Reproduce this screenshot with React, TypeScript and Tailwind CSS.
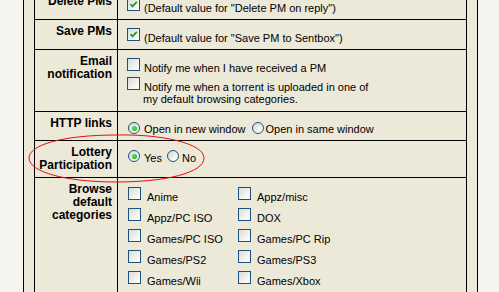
import React from 'react';

const FONT = "font-['Liberation_Sans',Arial,sans-serif]";

const CheckBox: React.FC<{ checked?: boolean }> = ({ checked }) => (
  <span className="relative block w-[13px] h-[13px] shrink-0 border border-[#1c5180] bg-[linear-gradient(135deg,#dcdcd5_0%,#f6f6f3_70%,#ffffff_100%)]">
    {checked && (
      <svg className="absolute left-[1px] top-[1px]" width="9" height="9" viewBox="0 0 9 9">
        <polyline points="1.5,4.2 3.5,6.3 7.8,1.8" fill="none" stroke="#21a121" strokeWidth="1.9" />
      </svg>
    )}
  </span>
);

const Radio: React.FC<{ checked?: boolean }> = ({ checked }) => (
  <span className="relative flex items-center justify-center w-[12px] h-[12px] shrink-0 rounded-full border border-[#1c5180] bg-[linear-gradient(135deg,#d6d6cf_0%,#f4f4f0_65%,#ffffff_100%)]">
    {checked && (
      <span className="block w-[5px] h-[5px] rounded-full bg-[radial-gradient(circle_at_40%_40%,#6be86b_0%,#2fb52f_60%,#1e931e_100%)]" />
    )}
  </span>
);

const CheckLine: React.FC<{ checked?: boolean; children: React.ReactNode; gap?: string }> = ({ checked, children, gap = 'ml-[4px]' }) => (
  <div className="flex items-start">
    <CheckBox checked={checked} />
    <span className={`${gap} pt-[4px] leading-[12px]`}>{children}</span>
  </div>
);

const Label: React.FC<{ children: React.ReactNode }> = ({ children }) => (
  <div className="w-[83px] shrink-0 border-r border-black pr-[5px] pt-[5px] text-right font-bold text-[12px] leading-[13px] text-black">
    {children}
  </div>
);

const CATEGORIES = [
  'Anime', 'Appz/misc',
  'Appz/PC ISO', 'DOX',
  'Games/PC ISO', 'Games/PC Rip',
  'Games/PS2', 'Games/PS3',
  'Games/Wii', 'Games/Xbox',
];

export default function App() {
  return (
    <div className={`relative w-[499px] h-[292px] overflow-hidden bg-[#f5f4ef] text-[11px] text-black ${FONT}`}>
      <div className="ml-[23px] -mt-[11px] w-[455px] border-x border-black bg-[#ece9d8] px-[10px]">
        <div className="border-t border-x border-black">
          <div className="flex h-[30px] border-b border-black">
            <Label>Delete PMs</Label>
            <div className="flex-1 pl-[9px] pt-[8px]">
              <CheckLine checked>(Default value for "Delete PM on reply")</CheckLine>
            </div>
          </div>

          <div className="flex h-[30px] border-b border-black">
            <Label>Save PMs</Label>
            <div className="flex-1 pl-[9px] pt-[8px]">
              <CheckLine checked>(Default value for "Save PM to Sentbox")</CheckLine>
            </div>
          </div>

          <div className="flex h-[62px] border-b border-black">
            <Label>Email<br />notification</Label>
            <div className="flex-1 pl-[9px] pt-[8px] flex flex-col gap-[3px]">
              <CheckLine>Notify me when I have received a PM</CheckLine>
              <CheckLine>
                Notify me when a torrent is uploaded in one of
                <br />
                <span className="-ml-[1px]">my default browsing categories.</span>
              </CheckLine>
            </div>
          </div>

          <div className="flex h-[29px] border-b border-black">
            <Label>HTTP links</Label>
            <div className="flex-1 pl-[10px] pt-[10px] flex items-start">
              <Radio checked />
              <span className="ml-[4px] pt-[1px] leading-[12px]">Open in new window</span>
              <span className="ml-[6px]"><Radio /></span>
              <span className="ml-[2px] pt-[1px] leading-[12px]">Open in same window</span>
            </div>
          </div>

          <div className="flex h-[37px] border-b border-black">
            <Label>Lottery<br />Participation</Label>
            <div className="flex-1 pl-[10px] pt-[9px] flex items-start">
              <Radio checked />
              <span className="ml-[4px] pt-[2px] leading-[12px]">Yes</span>
              <span className="ml-[5px]"><Radio /></span>
              <span className="ml-[3px] pt-[2px] leading-[12px]">No</span>
            </div>
          </div>

          <div className="flex h-[130px]">
            <Label>Browse<br />default<br />categories</Label>
            <div className="flex-1 pl-[10px] pt-[9px]">
              <div className="grid grid-cols-[110px_110px] gap-y-[5px]">
                {CATEGORIES.map((c) => (
                  <CheckLine key={c} gap="ml-[6px]">{c}</CheckLine>
                ))}
              </div>
            </div>
          </div>
        </div>
      </div>

      <svg className="pointer-events-none absolute left-0 top-0" width="499" height="292">
        <path
          d="M117 135 C 160 134, 204 143, 204 158 C 204 173, 165 182, 116 182 C 66 182, 29 172, 29 158 C 29 145, 62 135, 117 135 Z"
          fill="none"
          stroke="#e41010"
          strokeWidth="1"
        />
      </svg>
    </div>
  );
}
